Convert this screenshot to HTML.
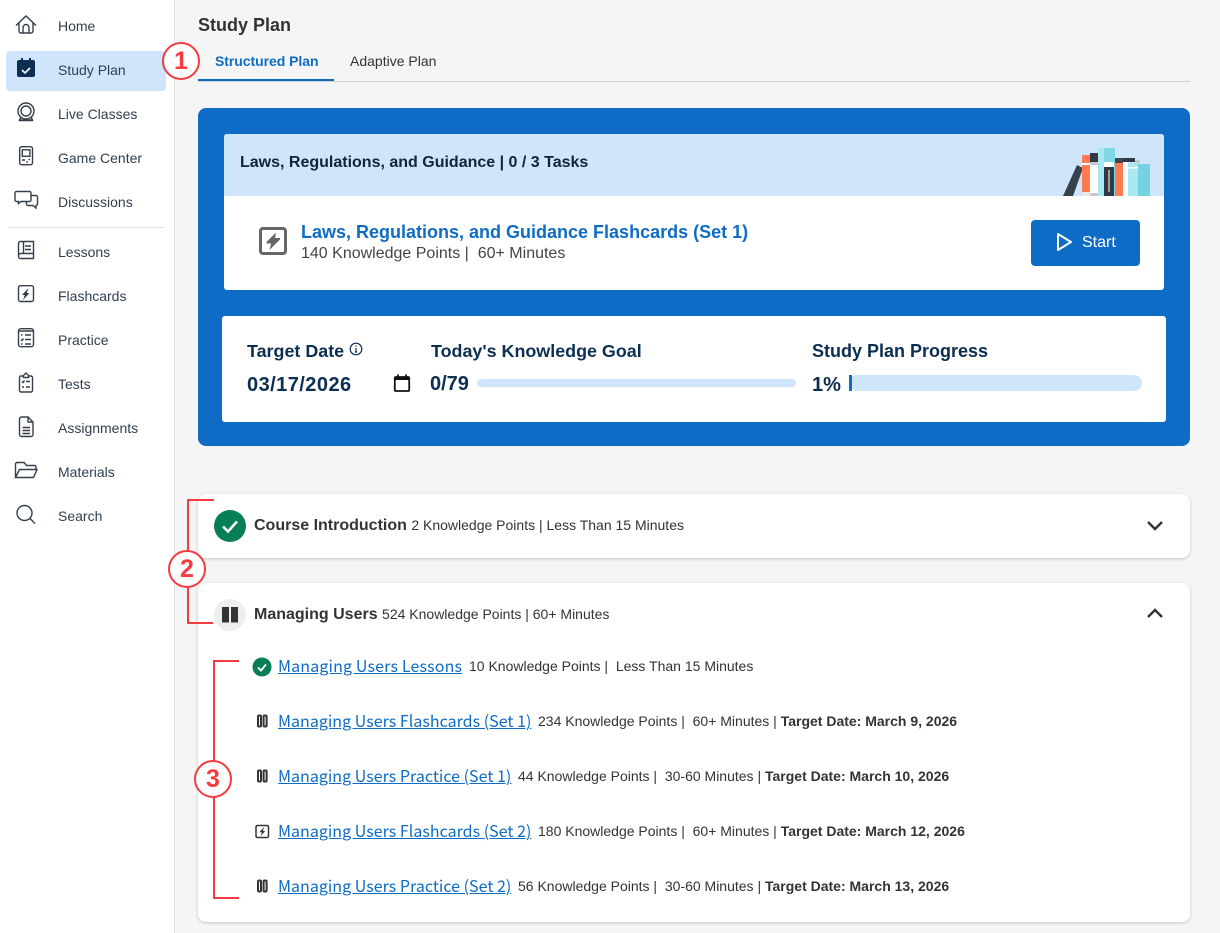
<!DOCTYPE html>
<html><head><meta charset="utf-8"><style>
html,body{margin:0;padding:0}
body{width:1220px;height:933px;overflow:hidden;background:#f5f5f5;position:relative;font-family:"Liberation Sans",sans-serif;color:#333}
.a,.t,svg{position:absolute}
.t{white-space:nowrap;line-height:20px}
.n{left:58px;font-size:14px;color:#2f3f4f}
.navy{color:#0b2e52;font-weight:bold}
.card{background:#fff;border-radius:8px;box-shadow:0 1px 3px rgba(0,0,0,.2)}
.l{font-family:"Noto Sans CJK JP","Liberation Sans",sans-serif;font-size:16px;color:#0f6cc5;text-decoration:underline;left:278px;letter-spacing:.02px}
.m{font-size:14px;color:#333}
.b{font-weight:bold;font-size:14px;color:#333}
.r{background:#f33b40;position:absolute}
.c{position:absolute;width:34px;height:34px;border:2px solid #f33b40;border-radius:50%;background:#fff;color:#f33b40;font-weight:bold;font-size:25px;line-height:34px;text-align:center}
</style></head><body>
<div class="a" style="left:0;top:0;width:174px;height:933px;background:#fff;border-right:1px solid #e2e2e2"></div>
<div class="a" style="left:6px;top:51px;width:160px;height:40px;border-radius:4px;background:#cfe5fb"></div>
<div class="a" style="left:8px;top:227px;width:156px;height:1px;background:#e0e0e0"></div>
<svg style="left:0;top:0" width="174" height="540" fill="none" stroke="#333f4c" stroke-width="1.400">
<path d="M16 25.500L26 16l10 9.500M19 23v8a2 2 0 0 0 2 2h10a2 2 0 0 0 2-2v-8M23 33v-5.500a3 3 0 0 1 6 0V33"/>
<path fill="#0b2e52" stroke="none" d="M19 60h2v-2h2v2h6v-2h2v2h2a2 2 0 0 1 2 2v13a2 2 0 0 1-2 2H19a2 2 0 0 1-2-2V62a2 2 0 0 1 2-2z"/><path stroke="#fff" stroke-width="1.600" d="M22 70l3 3 5-5"/>
<circle cx="26" cy="111" r="8"/><circle cx="26" cy="111" r="5"/><path d="M21 117l-1.500 3H32.500L31 117M19 120.500h14"/>
<rect x="19.700" y="146.700" width="12.800" height="18" rx="2"/><rect x="22.300" y="149.800" width="7.600" height="6.500"/><path d="M22 160h3M28.500 159.500h1.500M26.500 162h1.500"/>
<path d="M16.500 191.500H29.500a1.500 1.500 0 0 1 1.500 1.500v7a1.500 1.500 0 0 1-1.500 1.500H21l-2.500 2v-2h-2a1.500 1.500 0 0 1-1.500-1.500v-7a1.500 1.500 0 0 1 1.500-1.500zM31.500 195.500h4.500a1.500 1.500 0 0 1 1.500 1.500v7a1.500 1.500 0 0 1-1.500 1.500v2.500l-3-2.500h-5a1.500 1.500 0 0 1-1.500-1.500v-2.500"/>
<path d="M20.500 241.500H33.500V258.500H20.500a2 2 0 0 1-2-2V243.500a2 2 0 0 1 2-2zM18.500 255.500a2 2 0 0 1 2-2H33.500M23.500 241.500v12M25 246h6M25 249.500h6"/>
<rect x="18.500" y="285.700" width="15" height="15.800" rx="2"/><path fill="#333f4c" stroke="none" d="M28.500 288l-6.500 7h2.800l-1.800 5 6.500-7h-2.800z"/>
<rect x="18.500" y="328.700" width="15" height="18" rx="2.500"/><path d="M18.500 331h15M21 335h1.500M25 335h6M21 339.500l1 1 1.500-2M25 339.500h6M21 344h1.500M25 344h6"/>
<path d="M23.500 376h-2.500a1.500 1.500 0 0 0-1.500 1.500v13a1.500 1.500 0 0 0 1.500 1.500h10a1.500 1.500 0 0 0 1.500-1.500v-13a1.500 1.500 0 0 0-1.500-1.500h-2.500M23.500 377.500v-2l2.500-2.500 2.500 2.500v2zM22 381.500l1 1 1.500-2M26 381.500h4M22 387h2M26 387h4"/>
<path d="M21.500 417h6.500l5 5v12.500a2 2 0 0 1-2 2H21.500a2 2 0 0 1-2-2V419a2 2 0 0 1 2-2zM28 417v5h5M22.500 427.500h7.500M22.500 430.500h7.500M22.500 433.500h7.500"/>
<path d="M15.500 477V464a1.500 1.500 0 0 1 1.500-1.500h7l2.500 3h8a1.500 1.500 0 0 1 1.500 1.500v2M15.500 477.500l4-8H37l-3.500 8z"/>
<circle cx="24.500" cy="513" r="7.500"/><path d="M30 518.500l5 5"/>
</svg>
<div class="t n" style="top:16px">Home</div><div class="t n" style="top:60px">Study Plan</div><div class="t n" style="top:104px">Live Classes</div><div class="t n" style="top:148px">Game Center</div><div class="t n" style="top:192px">Discussions</div><div class="t n" style="top:242px">Lessons</div><div class="t n" style="top:286px">Flashcards</div><div class="t n" style="top:330px">Practice</div><div class="t n" style="top:374px">Tests</div><div class="t n" style="top:418px">Assignments</div><div class="t n" style="top:462px">Materials</div><div class="t n" style="top:506px">Search</div>

<div class="t" style="left:198px;top:15px;font-size:18px;font-weight:bold">Study Plan</div>
<div class="t" style="left:215px;top:51px;font-size:14px;font-weight:bold;color:#0f6cc5;letter-spacing:-.05px">Structured Plan</div>
<div class="t" style="left:350px;top:51px;font-size:14px">Adaptive Plan</div>
<div class="a" style="left:198px;top:81px;width:992px;height:1px;background:#cfcfcf"></div>
<div class="a" style="left:198px;top:79px;width:136px;height:2px;background:#0f6cc5"></div>

<div class="a" style="left:198px;top:108px;width:992px;height:338px;background:#0e6cc6;border-radius:8px"></div>
<div class="a" style="left:224px;top:134px;width:940px;height:156px;background:#fff;border-radius:3px"></div>
<div class="a" style="left:224px;top:134px;width:940px;height:62px;background:#cfe5fb;border-radius:3px 3px 0 0"></div>
<div class="t navy" style="left:240px;top:153px;font-size:16px;color:#10243a">Laws, Regulations, and Guidance | 0 / 3 Tasks</div>
<svg style="left:1060px;top:146px" width="92" height="50">
<path fill="#36414b" d="M3 50L17 19l6 3-10 28z"/>
<path fill="#ff7a50" d="M22 9h8v37h-8z"/><path fill="#fff" d="M22 17h8v2h-8z"/><path fill="#e8e8e8" d="M22 46h8v4h-8z"/>
<path fill="#2f3a46" d="M30 7h8v9h-8z"/><path fill="#c9c9c9" d="M30 16h8v3h-8z"/><path fill="#fff" d="M30 19h8v28h-8z"/><path fill="#c9c9c9" d="M30 47h8v3h-8z"/>
<path fill="#a9e8f1" d="M38 2h6v48h-6z"/><path fill="#7fd8e3" d="M44 2h11v14H44z"/><path fill="#fff" d="M44 16h10v5H44z"/><path fill="#2f3a46" d="M44 21h10v29H44z"/><path fill="#9aa0a6" d="M48 24h2v22h-2z"/><path fill="#7fd8e3" d="M54 16h1v34h-1z"/>
<path fill="#ff7a50" d="M55 17h8v33h-8z"/><path fill="#3f4751" d="M55 12h8v5h-8z"/><path fill="#2f3a46" d="M63 12h12v4H63z"/><path fill="#fff" d="M63 16h5v34h-5z"/><path fill="#c9c9c9" d="M75 14h5v3h-5z"/>
<path fill="#a9e8f1" d="M68 17h10v33H68z"/><path fill="#fff" d="M68 21h10v1.500H68z"/><path fill="#75d2e0" d="M78 18h12v32H78z"/>
</svg>
<svg style="left:257px;top:225px" width="32" height="32"><rect x="3.500" y="3.500" width="25" height="25" rx="2.500" fill="none" stroke="#666" stroke-width="3"/><path fill="#666" d="M19 7.500L9.500 17v1.500H14L12.500 25 23 14.500V13H18z"/></svg>
<div class="t" style="left:301px;top:222px;font-size:18px;font-weight:bold;color:#0f6cc5">Laws, Regulations, and Guidance Flashcards (Set 1)</div>
<div class="t" style="left:301px;top:244px;font-size:16px;color:#444">140 Knowledge Points |&nbsp; 60+ Minutes</div>
<div class="a" style="left:1031px;top:220px;width:109px;height:46px;background:#0e6cc6;border-radius:4px"></div>
<svg style="left:1055px;top:231px" width="20" height="22"><path d="M3 3l13 8-13 8z" fill="none" stroke="#fff" stroke-width="2" stroke-linejoin="round"/></svg>
<div class="t" style="left:1082px;top:233px;font-size:16px;color:#fff">Start</div>

<div class="a" style="left:222px;top:316px;width:944px;height:106px;background:#fff;border-radius:3px"></div>
<div class="t navy" style="left:247px;top:341px;font-size:17.900px">Target Date</div>
<svg style="left:349px;top:342px" width="14" height="14" fill="none" stroke="#0b2e52" stroke-width="1.200"><circle cx="7" cy="7" r="5.800"/><path d="M7 6v4M5.800 10h2.400M7 3.500v1.300"/></svg>
<div class="t navy" style="left:247px;top:375px;font-size:20px;letter-spacing:.45px">03/17/2026</div>
<svg style="left:392px;top:373px" width="20" height="20" fill="none" stroke="#111" stroke-width="1.800"><rect x="2.800" y="4" width="14.400" height="14" rx="1"/><path stroke-width="3" d="M2.800 5.500h14.400"/><path d="M6 1.500v3M14 1.500v3"/></svg>
<div class="t navy" style="left:431px;top:341px;font-size:17.900px">Today's Knowledge Goal</div>
<div class="t navy" style="left:430px;top:374px;font-size:20px">0/79</div>
<div class="a" style="left:477px;top:379px;width:319px;height:8px;border-radius:4px;background:#cfe5fb"></div>
<div class="t navy" style="left:812px;top:341px;font-size:18px">Study Plan Progress</div>
<div class="t navy" style="left:812px;top:375px;font-size:20px">1%</div>
<div class="a" style="left:849px;top:375px;width:293px;height:16px;border-radius:8px;background:#cfe5fb"></div>
<div class="a" style="left:849px;top:375px;width:3px;height:16px;background:#0e6cc6"></div>

<div class="a card" style="left:198px;top:494px;width:992px;height:64px"></div>
<div class="a card" style="left:198px;top:583px;width:992px;height:339px"></div>
<svg style="left:214px;top:510px" width="32" height="32"><circle cx="16" cy="16" r="16" fill="#067f55"/><path d="M9 16.500l5 5 9-10" fill="none" stroke="#fff" stroke-width="2.500"/></svg>
<div class="t" style="left:254px;top:515px;font-size:16px;font-weight:bold">Course Introduction <span style="font-size:14px;font-weight:normal">2 Knowledge Points | Less Than 15 Minutes</span></div>
<svg style="left:1145px;top:519px" width="20" height="14" fill="none" stroke="#333" stroke-width="2.400"><path d="M3 3l7 7 7-7"/></svg>
<svg style="left:214px;top:599px" width="32" height="32"><circle cx="16" cy="16" r="16" fill="#eee"/><rect x="8" y="8" width="7" height="15.500" fill="#333"/><rect x="17" y="8" width="7" height="15.500" fill="#333"/></svg>
<div class="t" style="left:254px;top:604px;font-size:16px;font-weight:bold">Managing Users <span style="font-size:14px;font-weight:normal">524 Knowledge Points | 60+ Minutes</span></div>
<svg style="left:1145px;top:606px" width="20" height="14" fill="none" stroke="#333" stroke-width="2.400"><path d="M3 11l7-7 7 7"/></svg>

<svg style="left:252px;top:657px" width="20" height="20"><circle cx="10" cy="10" r="9.500" fill="#067f55"/><path d="M6 10.500l3 3 5-6" fill="none" stroke="#fff" stroke-width="1.800"/></svg>
<div class="t l" style="top:655px;letter-spacing:.15px">Managing Users Lessons</div>
<div class="t m" style="left:469px;top:656px">10 Knowledge Points |&nbsp; Less Than 15 Minutes</div>

<svg style="left:255px;top:714px" width="14" height="14" fill="none" stroke="#333" stroke-width="2"><rect x="3" y="1.500" width="3" height="11" rx="1"/><rect x="8.600" y="1.500" width="3" height="11" rx="1"/></svg>
<div class="t l" style="top:710px">Managing Users Flashcards (Set 1)</div>
<div class="t m" style="left:538px;top:711px">234 Knowledge Points |&nbsp; 60+ Minutes | <span class="b">Target Date: March 9, 2026</span></div>

<svg style="left:255px;top:769px" width="14" height="14" fill="none" stroke="#333" stroke-width="2"><rect x="3" y="1.500" width="3" height="11" rx="1"/><rect x="8.600" y="1.500" width="3" height="11" rx="1"/></svg>
<div class="t l" style="top:765px">Managing Users Practice (Set 1)</div>
<div class="t m" style="left:518px;top:766px">44 Knowledge Points |&nbsp; 30-60 Minutes | <span class="b">Target Date: March 10, 2026</span></div>

<svg style="left:255px;top:824px" width="15" height="15"><rect x="1" y="1.500" width="12.500" height="12" rx="1.500" fill="none" stroke="#333" stroke-width="1.500"/><path fill="#333" d="M9 3L4.500 8.200h2.400L5.800 12 10.300 7H7.900z"/></svg>
<div class="t l" style="top:820px">Managing Users Flashcards (Set 2)</div>
<div class="t m" style="left:538px;top:821px">180 Knowledge Points |&nbsp; 60+ Minutes | <span class="b">Target Date: March 12, 2026</span></div>

<svg style="left:255px;top:879px" width="14" height="14" fill="none" stroke="#333" stroke-width="2"><rect x="3" y="1.500" width="3" height="11" rx="1"/><rect x="8.600" y="1.500" width="3" height="11" rx="1"/></svg>
<div class="t l" style="top:875px">Managing Users Practice (Set 2)</div>
<div class="t m" style="left:518px;top:876px">56 Knowledge Points |&nbsp; 30-60 Minutes | <span class="b">Target Date: March 13, 2026</span></div>

<div class="c" style="left:162px;top:42px">1</div>
<div class="r" style="left:187px;top:499px;width:2px;height:124px"></div>
<div class="r" style="left:187px;top:499px;width:27px;height:2px"></div>
<div class="r" style="left:187px;top:622px;width:26px;height:2px"></div>
<div class="c" style="left:168px;top:550px">2</div>
<div class="r" style="left:213px;top:660px;width:2px;height:239px"></div>
<div class="r" style="left:213px;top:660px;width:26px;height:2px"></div>
<div class="r" style="left:213px;top:897px;width:26px;height:2px"></div>
<div class="c" style="left:194px;top:760px">3</div>
</body></html>
